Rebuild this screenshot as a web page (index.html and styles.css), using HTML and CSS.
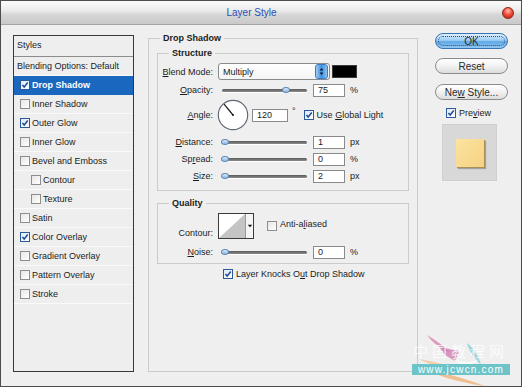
FILE: index.html
```html
<!DOCTYPE html>
<html>
<head>
<meta charset="utf-8">
<title>Layer Style</title>
<link rel="stylesheet" href="styles.css">
</head>
<body>
<div class="window">
  <div class="titlebar">
    <span class="title">Layer Style</span>
    <span class="close"></span>
  </div>
  <div class="body">
    <div class="list">
      <div class="list-head">Styles</div>
      <div class="item plain">Blending Options: Default</div>
      <div class="item sel"><span class="cb on"><svg viewBox="0 0 9 9"><path d="M1.6 4.4 L3.6 6.8 L7.6 1.6" /></svg></span><b>Drop Shadow</b></div>
      <div class="item"><span class="cb"></span>Inner Shadow</div>
      <div class="item"><span class="cb on"><svg viewBox="0 0 9 9"><path d="M1.6 4.4 L3.6 6.8 L7.6 1.6" /></svg></span>Outer Glow</div>
      <div class="item"><span class="cb"></span>Inner Glow</div>
      <div class="item"><span class="cb"></span>Bevel and Emboss</div>
      <div class="item indent"><span class="cb"></span>Contour</div>
      <div class="item indent"><span class="cb"></span>Texture</div>
      <div class="item"><span class="cb"></span>Satin</div>
      <div class="item"><span class="cb on"><svg viewBox="0 0 9 9"><path d="M1.6 4.4 L3.6 6.8 L7.6 1.6" /></svg></span>Color Overlay</div>
      <div class="item"><span class="cb"></span>Gradient Overlay</div>
      <div class="item"><span class="cb"></span>Pattern Overlay</div>
      <div class="item"><span class="cb"></span>Stroke</div>
    </div>

    <fieldset class="group main">
      <legend>Drop Shadow</legend>
      <fieldset class="group sub structure">
        <legend>Structure</legend>
        <div class="row row-blend">
          <span class="lbl"><u>B</u>lend Mode:</span>
          <span class="select"><span class="sel-text">Multiply</span><span class="spin"><svg viewBox="0 0 13 17"><path d="M6.5 4 L9 7.2 L4 7.2 Z M6.5 13 L9 9.8 L4 9.8 Z" /></svg></span></span>
          <span class="swatch"></span>
        </div>
        <div class="row row-op">
          <span class="lbl"><u>O</u>pacity:</span>
          <span class="slider"><span class="track"></span><span class="knob" style="left:75%"></span></span>
          <span class="num">75</span><span class="unit">%</span>
        </div>
        <div class="row row-angle">
          <span class="lbl"><u>A</u>ngle:</span>
          <span class="dial"><svg viewBox="0 0 34 34"><circle cx="17" cy="17" r="15.6" /><line x1="17" y1="17" x2="7.5" y2="5.5" /><circle class="dot" cx="17" cy="17" r="1.1" /></svg></span>
          <span class="num wide">120</span><span class="deg">°</span>
          <span class="cb on gl"><svg viewBox="0 0 9 9"><path d="M1.6 4.4 L3.6 6.8 L7.6 1.6" /></svg></span><span class="cbt">Use <u>G</u>lobal Light</span>
        </div>
        <div class="row row-dist">
          <span class="lbl"><u>D</u>istance:</span>
          <span class="slider"><span class="track"></span><span class="knob" style="left:3%"></span></span>
          <span class="num">1</span><span class="unit">px</span>
        </div>
        <div class="row row-spread">
          <span class="lbl">Sp<u>r</u>ead:</span>
          <span class="slider"><span class="track"></span><span class="knob" style="left:3%"></span></span>
          <span class="num">0</span><span class="unit">%</span>
        </div>
        <div class="row row-size">
          <span class="lbl"><u>S</u>ize:</span>
          <span class="slider"><span class="track"></span><span class="knob" style="left:3%"></span></span>
          <span class="num">2</span><span class="unit">px</span>
        </div>
      </fieldset>

      <fieldset class="group sub quality">
        <legend>Quality</legend>
        <div class="row row-contour">
          <span class="lbl lbl-bottom">Contour:</span>
          <span class="contour"><svg class="curve" viewBox="0 0 26 24" preserveAspectRatio="none"><rect width="26" height="24" fill="#ffffff"/><polygon points="0,24 26,0 26,24" fill="#c4c4c4"/></svg><span class="drop"><svg viewBox="0 0 9 24"><path d="M2 10.5 L7 10.5 L4.5 13.5 Z"/></svg></span></span>
          <span class="cb aa"></span><span class="cbt aat">Anti-a<u>l</u>iased</span>
        </div>
        <div class="row row-noise">
          <span class="lbl"><u>N</u>oise:</span>
          <span class="slider"><span class="track"></span><span class="knob" style="left:3%"></span></span>
          <span class="num">0</span><span class="unit">%</span>
        </div>
      </fieldset>

      <div class="knock">
        <span class="cb on"><svg viewBox="0 0 9 9"><path d="M1.6 4.4 L3.6 6.8 L7.6 1.6" /></svg></span><span class="cbt">Layer Knocks O<u>u</u>t Drop Shadow</span>
      </div>
    </fieldset>

    <div class="side">
      <div class="btn ok"><span class="focus">OK</span></div>
      <div class="btn reset"><span>Reset</span></div>
      <div class="btn newstyle"><span>Ne<u>w</u> Style...</span></div>
      <div class="prev-row"><span class="cb on"><svg viewBox="0 0 9 9"><path d="M1.6 4.4 L3.6 6.8 L7.6 1.6" /></svg></span><span class="cbt">Pre<u>v</u>iew</span></div>
      <div class="preview"><span class="pswatch"></span></div>
    </div>
  </div>

  <div class="watermark">
    <svg class="strokes" viewBox="0 0 112 58">
      <path d="M8 36 C 30 46, 55 54, 80 57 C 62 50, 40 44, 8 36 Z" fill="#f1b27a" opacity="0.8"/>
      <path d="M14 30 C 30 38, 52 44, 76 46 C 56 40, 36 34, 14 30 Z" fill="#f4c08e" opacity="0.75"/>
      <path d="M22 6 C 28 14, 36 20, 46 24 C 40 18, 32 12, 22 6 Z" fill="#d98ab0" opacity="0.85"/>
      <path d="M34 18 L 54 22 L 50 32 L 40 26 Z" fill="#cf7fb0" opacity="0.8"/>
      <path d="M62 14 C 70 20, 74 28, 76 36 C 70 30, 64 22, 62 14 Z" fill="#8fd0d8" opacity="0.85"/>
      <path d="M48 30 C 58 34, 66 34, 74 30 C 66 38, 56 38, 48 30 Z" fill="#ffffff" opacity="0.7"/>
    </svg>
    <span class="wm-cn">中国教程网</span>
    <span class="wm-url">www.jcwcn.com</span>
  </div>
</div>
</body>
</html>
```

FILE: styles.css
```css
* { box-sizing: border-box; }
html, body { margin: 0; padding: 0; }
body {
  width: 522px;
  height: 387px;
  overflow: hidden;
  font-family: "Liberation Sans", Arial, sans-serif;
  font-size: 9px;
  color: #1c1c1c;
  background: #efefef;
}
u { text-decoration: underline; text-underline-offset: 1px; }

.window {
  position: relative;
  width: 522px;
  height: 387px;
  border: 1px solid #4c4c4c;
  background: #efefef;
  display: flex;
  flex-direction: column;
}

.titlebar {
  height: 24px;
  flex: none;
  display: flex;
  align-items: center;
  background: linear-gradient(#fbfbfb, #ececec 40%, #d6d6d6 60%, #c9c9c9);
  border-bottom: 1px solid #a4a4a4;
}
.title {
  flex: 1;
  text-align: center;
  font-size: 10px;
  color: #2c4fb6;
}
.close {
  width: 12px;
  height: 12px;
  margin-right: 7px;
  border-radius: 50%;
  border: 1px solid #8a2418;
  background: radial-gradient(circle at 50% 30%, #ffc2b4 0, #f0503a 45%, #b81a10 100%);
}

.body {
  flex: 1;
  display: flex;
  align-items: flex-start;
  padding: 7px 0 0 12px;
}

/* ---------- left style list ---------- */
.list {
  flex: none;
  margin-top: 3px;
  width: 121px;
  height: 337px;
  border: 1px solid #383838;
  background: #eeeeee;
}
.list-head {
  height: 21px;
  padding-left: 3px;
  line-height: 19px;
  border-bottom: 1px solid #8c8c8c;
}
.item {
  height: 19px;
  display: flex;
  align-items: center;
  padding-left: 6px;
  border-bottom: 1px solid #fafafa;
}
.item.plain { padding-left: 3px; }
.item.indent { padding-left: 17px; }
.item .cb { margin-right: 2px; }
.item.sel {
  background: #1a67bf;
  color: #ffffff;
  border-bottom-color: #1a67bf;
}

/* ---------- checkbox ---------- */
.cb {
  flex: none;
  display: inline-block;
  width: 10px;
  height: 10px;
  border: 1px solid #8e8e8e;
  background: linear-gradient(135deg, #e6e6e6, #ffffff);
}
.cb.on {
  border-color: #2a5a9c;
  background: linear-gradient(135deg, #dde8f6, #ffffff);
}
.cb svg { display: block; width: 8px; height: 8px; }
.cb svg path { fill: none; stroke: #1f4d9a; stroke-width: 1.7; }

/* ---------- group boxes ---------- */
.group {
  margin: 0;
  padding: 0;
  min-width: 0;
  border: 1px solid #cbcbcb;
}
.group > legend {
  padding: 0 3px;
  line-height: 12px;
  font-weight: bold;
}
.main {
  flex: none;
  margin-left: 14px;
  width: 270px;
  height: 340px;
  padding: 3px 8px 0 8px;
}
.main > legend { margin-left: 3px; }
.sub { width: 252px; }
.sub > legend { margin-left: 11px; }
.structure { height: 144px; padding: 4px 0 0 0; }
.quality { margin-top: 6px; height: 67px; padding: 4px 0 0 0; }

.row { display: flex; align-items: center; }
.lbl {
  flex: none;
  width: 55px;
  margin-right: 5px;
  text-align: right;
}
.row-blend { height: 17px; }
.row-op { height: 14px; margin-top: 3px; }
.row-angle { height: 32px; margin-top: 2px; }
.row-dist { height: 14px; margin-top: 4px; }
.row-spread { height: 14px; margin-top: 3px; }
.row-size { height: 14px; margin-top: 3px; }
.row-contour { height: 26px; align-items: stretch; }
.row-noise { height: 14px; margin-top: 6px; }

.select {
  flex: none;
  width: 112px;
  height: 17px;
  display: flex;
  align-items: center;
  border: 1px solid #8a8a8a;
  border-radius: 3px;
  background: linear-gradient(#ffffff, #f4f4f4);
}
.sel-text { flex: 1; padding-left: 4px; }
.spin {
  width: 13px;
  height: 15px;
  margin-right: 1px;
  border-radius: 3px;
  border: 1px solid #3f79bf;
  background: linear-gradient(90deg, #9fcbf3, #3d8fe0 50%, #8cc3f3);
}
.spin svg { display: block; width: 11px; height: 13px; }
.spin svg path { fill: #0d1a33; }
.swatch {
  flex: none;
  margin-left: 2px;
  width: 25px;
  height: 13px;
  background: #000000;
  border: 1px solid #3a3a3a;
}

.slider {
  flex: none;
  position: relative;
  margin-left: 4px;
  width: 85px;
  height: 14px;
  display: flex;
  align-items: center;
}
.track {
  width: 100%;
  height: 3px;
  border-radius: 2px;
  background: linear-gradient(#5a5a5a, #8c8c8c);
  box-shadow: 0 1px 0 #ffffff;
}
.knob {
  position: absolute;
  top: 4px;
  width: 8px;
  height: 6px;
  margin-left: -4px;
  border-radius: 50%;
  border: 1px solid #5f86b4;
  background: linear-gradient(#e2eefa, #86b2de);
}
.num {
  flex: none;
  margin-left: 6px;
  width: 32px;
  height: 13px;
  line-height: 11px;
  padding-left: 4px;
  border: 1px solid #8a8a8a;
  background: #ffffff;
}
.num.wide { margin-left: 3px; width: 36px; }
.unit { margin-left: 5px; }
.deg { margin-left: 4px; align-self: flex-start; margin-top: 7px; }
.dial { flex: none; width: 32px; height: 32px; margin-left: -1px; }
.dial svg { display: block; width: 32px; height: 32px; }
.dial circle { fill: #ffffff; stroke: #5d6672; stroke-width: 1.2; }
.dial line { stroke: #1a1a1a; stroke-width: 1.3; }
.dial circle.dot { fill: #1a1a1a; stroke: none; }
.gl { margin-left: 8px; }
.cbt { margin-left: 3px; }

.lbl-bottom { align-self: flex-end; padding-bottom: 1px; }
.contour {
  flex: none;
  width: 36px;
  height: 26px;
  display: flex;
  border: 1px solid #3a3a3a;
  background: #ffffff;
}
.curve { display: block; width: 26px; height: 24px; }
.drop {
  width: 8px;
  height: 24px;
  border-left: 1px solid #9a9a9a;
  background: #f4f4f4;
}
.drop svg { display: block; width: 8px; height: 24px; }
.drop svg path { fill: #111111; }
.aa { align-self: flex-start; margin-top: 8px; margin-left: 13px; }
.aat { align-self: flex-start; margin-top: 6px; }

.knock {
  margin-top: 4px;
  height: 12px;
  display: flex;
  align-items: center;
  padding-left: 66px;
}

/* ---------- right column ---------- */
.side {
  flex: none;
  margin-left: 17px;
  margin-top: 1px;
  width: 73px;
  display: flex;
  flex-direction: column;
}
.btn {
  height: 16px;
  border-radius: 8px;
  border: 1px solid #8c8c8c;
  background: linear-gradient(#ffffff, #f2f2f2 50%, #dcdcdc);
  display: flex;
  align-items: center;
  justify-content: center;
  font-size: 10px;
  color: #2a2a2a;
}
.btn.ok {
  border-color: #3b74b4;
  background: linear-gradient(#e0f0ff, #9ccdf4 45%, #5fa8e6 55%, #92c8f2);
  padding: 2px;
}
.focus {
  width: 100%;
  height: 100%;
  display: flex;
  align-items: center;
  justify-content: center;
  border: 1px dotted #31496a;
  border-radius: 6px;
}
.reset { margin-top: 9px; }
.newstyle { margin-top: 10px; }
.prev-row {
  margin-top: 8px;
  height: 10px;
  display: flex;
  align-items: center;
  padding-left: 11px;
}
.preview {
  margin-top: 6px;
  margin-left: 7px;
  width: 55px;
  height: 57px;
  display: flex;
  align-items: center;
  justify-content: center;
  background: #d8d8d8;
  border: 1px solid #cfcfcf;
}
.pswatch {
  width: 28px;
  height: 28px;
  background: linear-gradient(135deg, #fbe3a0, #f5d283);
  box-shadow: 1px 1px 0 #a8905a, 2px 2px 1px rgba(0,0,0,0.25);
}

/* ---------- watermark ---------- */
.watermark {
  position: absolute;
  left: 404px;
  top: 328px;
  width: 112px;
  height: 58px;
}
.strokes { position: absolute; left: 0; top: 0; width: 112px; height: 58px; }
.wm-cn {
  position: absolute;
  left: 8px;
  top: 14px;
  font-family: "Noto Sans CJK SC", sans-serif;
  font-size: 15px;
  line-height: 16px;
  letter-spacing: 4px;
  color: rgba(255,255,255,0.75);
}
.wm-url {
  position: absolute;
  left: 7px;
  top: 35px;
  width: 98px;
  height: 11px;
  line-height: 11px;
  text-align: center;
  font-size: 10px;
  letter-spacing: 1.2px;
  color: #ffffff;
  background: #6cc3c8;
}
```
